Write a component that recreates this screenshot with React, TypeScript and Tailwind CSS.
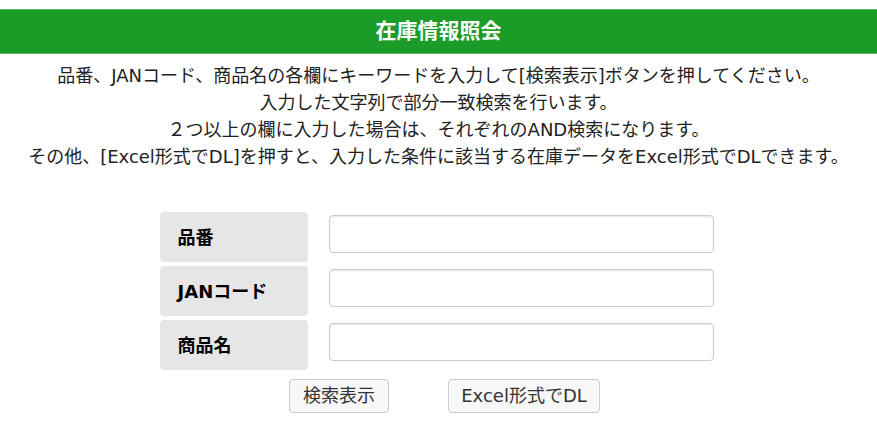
const fields = ['品番', 'JANコード', '商品名'];

export default function App() {
  return (
    <div
      className="min-h-screen bg-white text-[#222] pt-[9px]"
      style={{ fontFamily: '"DejaVu Sans", "Noto Sans CJK JP", sans-serif' }}
    >
      {/* タイトルバー */}
      <h1 className="h-[45px] bg-[#1b9b28] border-y border-[#5cb866] flex items-center justify-center text-white text-[21px] font-bold">
        在庫情報照会
      </h1>

      {/* 説明文 */}
      <div className="mt-[8px] text-center text-[18px] leading-[27px]">
        <p>品番、JANコード、商品名の各欄にキーワードを入力して[検索表示]ボタンを押してください。</p>
        <p>入力した文字列で部分一致検索を行います。</p>
        <p>２つ以上の欄に入力した場合は、それぞれのAND検索になります。</p>
        <p>その他、[Excel形式でDL]を押すと、入力した条件に該当する在庫データをExcel形式でDLできます。</p>
      </div>

      {/* 検索フォーム */}
      <div className="mt-[42px] mx-auto w-[558px] flex flex-col gap-[4px]">
        {fields.map((label) => (
          <div key={label} className="flex items-start">
            <div className="w-[148px] h-[50px] bg-[#e6e6e6] rounded-[4px] flex items-center pl-[18px] text-[18px] font-bold text-black">
              {label}
            </div>
            <input
              type="text"
              className="ml-[21px] mt-[3px] w-[385px] h-[38px] border border-[#cccccc] rounded-[4px] bg-white px-2 shadow-[inset_0_1px_2px_rgba(0,0,0,0.1)] outline-none"
            />
          </div>
        ))}
      </div>

      <div className="mt-[9px] flex justify-center gap-[59px] pl-[12px]">
        <button className="h-[34px] w-[100px] border border-[#cccccc] rounded-[4px] bg-[#f7f7f7] text-[#333] text-[18px] leading-none">
          検索表示
        </button>
        <button className="h-[34px] w-[152px] border border-[#cccccc] rounded-[4px] bg-[#f7f7f7] text-[#333] text-[18px] leading-none">
          Excel形式でDL
        </button>
      </div>
    </div>
  );
}
